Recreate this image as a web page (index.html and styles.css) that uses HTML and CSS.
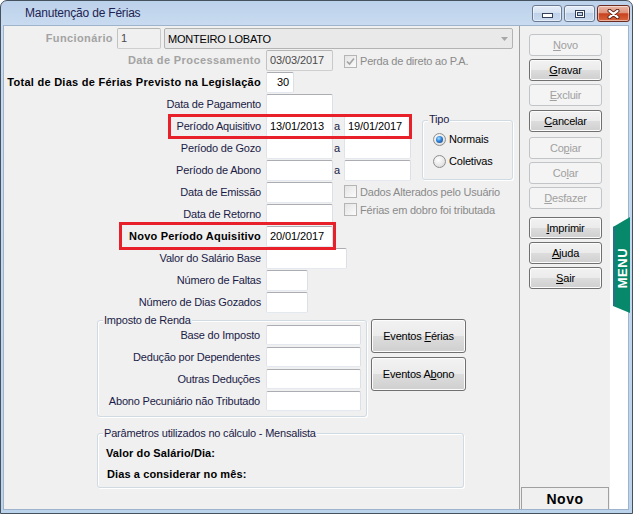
FILE: index.html
```html
<!DOCTYPE html>
<html lang="pt-BR">
<head>
<meta charset="utf-8">
<title>Manutenção de Férias</title>
<link rel="stylesheet" href="styles.css">
</head>
<body>
<div class="window">
  <div class="titlebar">
    <span class="title">Manutenção de Férias</span>
    <div class="caps">
      <span class="cap cap-min"><svg width="11" height="5" viewBox="0 0 11 5"><rect x="0.5" y="0.5" width="10" height="4" fill="#fff" stroke="#34405a"/></svg></span>
      <span class="cap cap-max"><svg width="10" height="8" viewBox="0 0 10 8"><rect x="0.5" y="0.5" width="9" height="7" fill="none" stroke="#34405a"/><rect x="1.5" y="1.5" width="7" height="5" fill="none" stroke="#fff"/><rect x="2.5" y="2.5" width="5" height="3" fill="none" stroke="#34405a"/></svg></span>
      <span class="cap cap-close"><svg width="13" height="10" viewBox="0 0 13 10"><path d="M2.5 1.8L10.5 8.2M10.5 1.8L2.5 8.2" stroke="#5a2114" stroke-width="4" stroke-linecap="round"/><path d="M2.5 1.8L10.5 8.2M10.5 1.8L2.5 8.2" stroke="#fff" stroke-width="2.2" stroke-linecap="round"/></svg></span>
    </div>
  </div>

  <div class="body">
    <div class="form">
      <div class="row-func">
        <span class="lbl-func dis-b">Funcionário</span>
        <span class="in dis w-code">1</span>
        <span class="combo"><span>MONTEIRO LOBATO</span><svg width="7" height="4" viewBox="0 0 7 4"><path d="M0 0H7L3.5 4Z" fill="#a7a7a7"/></svg></span>
      </div>

      <div class="grid">
        <span class="lbl dis-b">Data de Processamento</span>
        <span class="in dis c3">03/03/2017</span>
        <span class="chk chk-row c5-8"><span class="box"><svg width="11" height="11" viewBox="0 0 11 11"><path d="M2 5.5L4.5 8L9 2.5" fill="none" stroke="#a3a3a3" stroke-width="1.6"/></svg></span><span>Perda de direto ao P.A.</span></span>

        <span class="lbl bold wide">Total de Dias de Férias Previsto na Legislação</span>
        <span class="in c3 w28 num">30</span>

        <span class="lbl">Data de Pagamento</span>
        <span class="in c3"></span>

        <span class="lbl">Período Aquisitivo</span>
        <span class="in c3">13/01/2013</span>
        <span class="a c4">a</span>
        <span class="in c5">19/01/2017</span>

        <span class="lbl">Período de Gozo</span>
        <span class="in c3"></span>
        <span class="a c4">a</span>
        <span class="in c5"></span>

        <span class="lbl">Período de Abono</span>
        <span class="in c3"></span>
        <span class="a c4">a</span>
        <span class="in c5"></span>

        <span class="lbl">Data de Emissão</span>
        <span class="in c3"></span>

        <span class="lbl">Data de Retorno</span>
        <span class="in c3"></span>

        <span class="lbl bold">Novo Período Aquisitivo</span>
        <span class="in c3">20/01/2017</span>

        <span class="lbl">Valor do Salário Base</span>
        <span class="in c3-6 w81"></span>

        <span class="lbl">Número de Faltas</span>
        <span class="in c3 w42"></span>

        <span class="lbl">Número de Dias Gozados</span>
        <span class="in c3 w42"></span>

        <div class="group tipo">
          <span class="gtitle gtitle-tipo">Tipo</span>
          <span class="radio-row"><span class="radio on"></span><span>Normais</span></span>
          <span class="radio-row"><span class="radio"></span><span>Coletivas</span></span>
        </div>

        <div class="chks">
          <span class="chk"><span class="box"></span><span>Dados Alterados pelo Usuário</span></span>
          <span class="chk"><span class="box"></span><span>Férias em dobro foi tributada</span></span>
        </div>
      </div>

      <div class="lower">
        <div class="group ir">
          <span class="gtitle">Imposto de Renda</span>
          <div class="ir-grid">
            <span class="lbl2">Base do Imposto</span><span class="in h20"></span>
            <span class="lbl2">Dedução por Dependentes</span><span class="in h20"></span>
            <span class="lbl2">Outras Deduções</span><span class="in h20"></span>
            <span class="lbl2">Abono Pecuniário não Tributado</span><span class="in h20"></span>
          </div>
        </div>
        <div class="ev">
          <span class="btn ev-btn"><span>Eventos <u>F</u>érias</span></span>
          <span class="btn ev-btn"><span>Eventos A<u>b</u>ono</span></span>
        </div>
      </div>

      <div class="group params">
        <span class="gtitle">Parâmetros utilizados no cálculo - Mensalista</span>
        <span class="pline">Valor do Salário/Dia:</span>
        <span class="pline pline2">Dias a considerar no mês:</span>
      </div>

      <div class="hl hl1"></div>
      <div class="hl hl2"></div>
    </div>

    <div class="divider"></div>

    <div class="side">
      <span class="btn sbtn off"><span><u>N</u>ovo</span></span>
      <span class="btn sbtn"><span><u>G</u>ravar</span></span>
      <span class="btn sbtn off"><span><u>E</u>xcluir</span></span>
      <span class="btn sbtn g1"><span><u>C</u>ancelar</span></span>
      <span class="btn sbtn off g2"><span>Co<u>p</u>iar</span></span>
      <span class="btn sbtn off"><span>Co<u>l</u>ar</span></span>
      <span class="btn sbtn off"><span><u>D</u>esfazer</span></span>
      <span class="btn sbtn g3"><span><u>I</u>mprimir</span></span>
      <span class="btn sbtn"><span><u>A</u>juda</span></span>
      <span class="btn sbtn"><span><u>S</u>air</span></span>
      <span class="status">Novo</span>
    </div>

    <div class="strip"></div>
  </div>

  <svg class="menu-tab" width="17" height="96" viewBox="0 0 17 96">
    <polygon points="0,10 17,0 17,96 0,89" fill="#08886a"/>
    <polygon points="0,10 2,9 2,89 0,89" fill="#2b6f8a"/>
    <text x="9.5" y="51" transform="rotate(-90 9.5 51)" text-anchor="middle" dominant-baseline="central" class="menu-text">MENU</text>
  </svg>
</div>
</body>
</html>
```

FILE: styles.css
```css
html, body {
  margin: 0;
  padding: 0;
  background: #ffffff;
}

body {
  font-family: "Liberation Sans", Arial, sans-serif;
  font-size: 11px;
  letter-spacing: -0.2px;
  color: #000;
}

.window {
  position: relative;
  width: 633px;
  height: 514px;
  box-sizing: border-box;
  border: 1px solid #46515f;
  border-radius: 7px 7px 0 0;
  background: linear-gradient(to bottom, #bcd1ea 0, #c8dbf0 25px, #bcd3ec 100%);
  padding: 0 4px 4px 3px;
  display: flex;
  flex-direction: column;
  overflow: hidden;
}

/* ---------- title bar ---------- */
.titlebar {
  height: 25px;
  flex: none;
  display: flex;
  justify-content: space-between;
}

.title {
  padding-left: 21px;
  line-height: 25px;
  font-size: 12px;
  color: #1e2352;
}

.caps {
  display: flex;
  gap: 2px;
  margin-top: 4px;
  margin-right: -2px;
  height: 17px;
}

.cap {
  box-sizing: border-box;
  height: 17px;
  border: 1px solid #6a7a93;
  border-radius: 3px;
  background: linear-gradient(to bottom, #e6eef8 0, #d6e2f2 45%, #bfd1e9 50%, #cadbf0 100%);
  box-shadow: inset 0 0 0 1px rgba(255, 255, 255, 0.5);
  display: flex;
  align-items: center;
  justify-content: center;
}

.cap-min { width: 30px; align-items: flex-end; padding-bottom: 3px; }
.cap-max { width: 31px; }
.cap-close {
  width: 33px;
  border-color: #6d2c1f;
  background: linear-gradient(to bottom, #ebb6a6 0, #de927a 45%, #c8421f 52%, #d9653c 100%);
}

/* ---------- body ---------- */
.body {
  flex: 1;
  display: flex;
  background: #f0f0f0;
  box-shadow: 0 0 0 1px #9fb3cc;
}

.form {
  position: relative;
  width: 515px;
  flex: none;
  padding-top: 2px;
  box-sizing: border-box;
}

.row-func {
  display: flex;
  height: 22px;
  align-items: flex-start;
}

.lbl-func {
  width: 109px;
  text-align: right;
  line-height: 21px;
}

.dis-b {
  font-weight: bold;
  color: #a3a3a3;
  letter-spacing: 0.4px;
}

.in {
  box-sizing: border-box;
  height: 21px;
  background: #fff;
  border: 1px solid;
  border-color: #abadb3 #dbdfe6 #e3e9ef #e2e3ea;
  border-radius: 2px;
  padding: 0 3px;
  line-height: 19px;
  white-space: nowrap;
  overflow: hidden;
  color: #000;
  letter-spacing: -0.1px;
}

.in.dis {
  background: #f0f0f0;
  border-color: #b5b5b5 #c9c9c9 #cfcfcf #c2c2c2;
  color: #4a4a4a;
}

.w-code {
  width: 44px;
  margin-left: 4px;
}

.combo {
  box-sizing: border-box;
  width: 349px;
  height: 21px;
  margin-left: 3px;
  background: #e9e9e9;
  border: 1px solid #b3b3b3;
  border-radius: 2px;
  display: flex;
  align-items: center;
  justify-content: space-between;
  padding: 0 4px 0 3px;
}

.grid {
  display: grid;
  grid-template-columns: 257px 5px 67px 12px 66px 12px 90px;
  grid-auto-rows: 22px;
}

.lbl {
  grid-column: 1;
  text-align: right;
  line-height: 21px;
  white-space: nowrap;
  color: #1b1b47;
}

.lbl.bold {
  font-weight: bold;
  color: #000;
  letter-spacing: 0.2px;
}

.lbl.bold.wide { letter-spacing: 0.27px; }

.lbl.dis-b { color: #a3a3a3; letter-spacing: 0.4px; }

.c3 { grid-column: 3; }
.c4 { grid-column: 4; }
.c5 { grid-column: 5; }
.c3-6 { grid-column: 3 / 6; }
.c5-8 { grid-column: 5 / 8; }

.w28 { width: 28px; justify-self: start; }
.w42 { width: 42px; justify-self: start; }
.w81 { width: 81px; justify-self: start; }
.num { text-align: right; padding-right: 4px; }

.in.c5 { margin-left: -1px; }

.a {
  line-height: 21px;
  padding-left: 1px;
  color: #1b1b47;
}

/* checkboxes */
.chk {
  display: flex;
  align-items: center;
  gap: 3px;
  height: 13px;
  color: #8a8a8a;
  white-space: nowrap;
  margin-left: -1px;
}

.chk-row { align-self: center; }

.box {
  box-sizing: border-box;
  width: 13px;
  height: 13px;
  flex: none;
  border: 1px solid #b5b5b5;
  background: linear-gradient(135deg, #e4e4e4, #fbfbfb);
  display: flex;
  align-items: center;
  justify-content: center;
}

.chks {
  grid-column: 5 / 8;
  grid-row: 7 / 9;
  display: flex;
  flex-direction: column;
  gap: 5px;
  padding-top: 3px;
}

/* group boxes */
.group {
  position: relative;
  box-sizing: border-box;
  border: 1px solid #d0dae3;
  border-radius: 3px;
  box-shadow: inset 1px 1px 0 #fff, 1px 1px 0 #fff;
}

.gtitle {
  position: absolute;
  left: 5px;
  top: -7px;
  line-height: 13px;
  padding: 0 1px;
  background: #f0f0f0;
  color: #1b1b47;
  white-space: nowrap;
}

.tipo {
  grid-column: 7;
  grid-row: 4 / 7;
  margin: 4px 0 2px -1px;
  padding: 7px 0 0 10px;
  display: flex;
  flex-direction: column;
}

.gtitle-tipo {
  top: -8px;
  left: 5px;
}

.radio-row {
  height: 22px;
  display: flex;
  align-items: center;
  gap: 3px;
  color: #000;
}

.radio {
  position: relative;
  box-sizing: border-box;
  width: 13px;
  height: 13px;
  flex: none;
  border-radius: 50%;
  border: 1px solid #8e8f8f;
  background: radial-gradient(circle at 40% 35%, #ffffff 0, #e8e8e8 55%, #d0d0d0 100%);
}

.radio.on::after {
  content: "";
  position: absolute;
  left: 2px;
  top: 2px;
  width: 7px;
  height: 7px;
  border-radius: 50%;
  background: radial-gradient(circle at 40% 35%, #a6e2ff 0, #2f80d8 45%, #113f78 100%);
}

/* lower part */
.lower {
  display: flex;
  align-items: flex-start;
  margin-top: 5px;
  padding-left: 93px;
}

.ir {
  width: 270px;
  height: 97px;
  margin-top: 1px;
  padding: 4px 5px 0 0;
}

.ir-grid {
  display: grid;
  grid-template-columns: 162px 95px;
  column-gap: 6px;
  row-gap: 2px;
  grid-auto-rows: 20px;
}

.lbl2 {
  text-align: right;
  line-height: 20px;
  white-space: nowrap;
  color: #1b1b47;
}

.in.h20 {
  height: 20px;
  line-height: 18px;
}

.ev {
  display: flex;
  flex-direction: column;
  gap: 4px;
  margin-left: 4px;
}

.btn {
  box-sizing: border-box;
  display: flex;
  align-items: center;
  justify-content: center;
  border: 1px solid #707070;
  border-radius: 3px;
  background: linear-gradient(to bottom, #f2f2f2 0%, #ebebeb 49%, #dddddd 50%, #cfcfcf 100%);
  box-shadow: inset 0 0 0 1px #fcfcfc;
  color: #000;
  white-space: nowrap;
}

.btn.off {
  background: #f4f4f4;
  border-color: #c2c5c8;
  color: #a0a0a0;
  box-shadow: none;
}

.ev-btn {
  width: 95px;
  height: 34px;
}

.params {
  width: 367px;
  height: 55px;
  margin: 16px 0 0 93px;
  padding: 13px 0 0 8px;
  display: flex;
  flex-direction: column;
  gap: 8px;
}

.pline {
  font-weight: bold;
  line-height: 13px;
  color: #000;
  letter-spacing: 0.1px;
}

.pline2 { padding-left: 1px; }

/* red highlight frames */
.hl {
  position: absolute;
  box-sizing: border-box;
  border: 3px solid #e8202a;
}

.hl1 {
  left: 164px;
  top: 88px;
  width: 244px;
  height: 25px;
}

.hl2 {
  left: 115px;
  top: 196px;
  width: 217px;
  height: 28px;
}

/* right side */
.divider {
  width: 1px;
  flex: none;
  background: #a0a0a0;
}

.side {
  width: 90px;
  flex: none;
  box-sizing: border-box;
  display: flex;
  flex-direction: column;
  padding: 8px 0 0 9px;
}

.sbtn {
  width: 73px;
  height: 22px;
  flex: none;
  margin-top: 3px;
}

.sbtn:first-child { margin-top: 0; }
.sbtn.g1 { margin-top: 4px; }
.sbtn.g2 { margin-top: 5px; }
.sbtn.g3 { margin-top: 8px; }

.status {
  margin-top: auto;
  margin-left: -8px;
  width: 88px;
  height: 22px;
  box-sizing: border-box;
  border: 1px solid #a0a0a0;
  border-bottom: none;
  display: flex;
  align-items: center;
  justify-content: center;
  font-size: 14px;
  font-weight: bold;
  letter-spacing: 0.5px;
  color: #000;
}

.strip {
  width: 18px;
  flex: none;
  background: #ffffff;
}

.menu-tab {
  position: absolute;
  left: 612px;
  top: 216px;
}

.menu-text {
  font-family: "Liberation Sans", Arial, sans-serif;
  font-size: 13px;
  font-weight: bold;
  letter-spacing: 0.6px;
  fill: #ffffff;
}
```
